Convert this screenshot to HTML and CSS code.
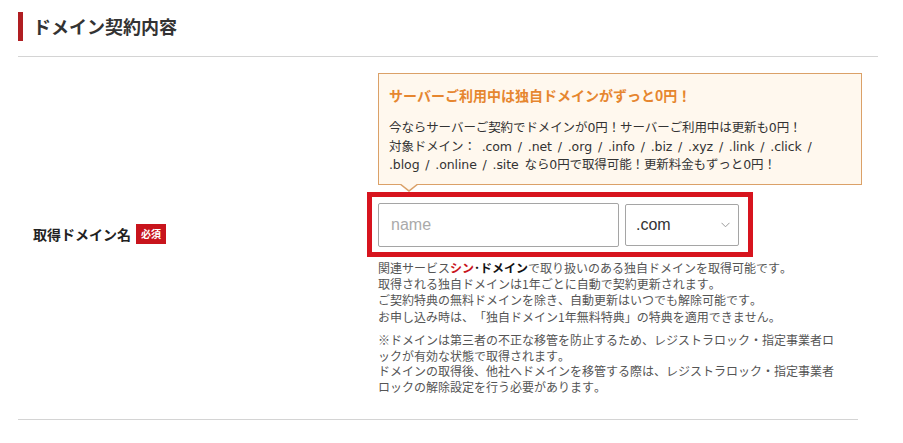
FILE: index.html
```html
<!DOCTYPE html>
<html lang="ja">
<head>
<meta charset="utf-8">
<link rel="stylesheet" href="styles.css">
</head>
<body>
<div class="page">
  <h2 class="heading"><span class="bar"></span>ドメイン契約内容</h2>
  <div class="row">
    <div class="label">取得ドメイン名<span class="badge">必須</span></div>
    <div class="content">
      <div class="callout">
        <p class="callout-title">サーバーご利用中は独自ドメインがずっと0円！</p>
        <p class="callout-body">今ならサーバーご契約でドメインが0円！サーバーご利用中は更新も0円！<br>対象ドメイン： .com / .net / .org / .info / .biz / .xyz / .link / .click /<br>.blog / .online / .site なら0円で取得可能！更新料金もずっと0円！</p>
      </div>
      <div class="highlight">
        <div class="input">name</div>
        <div class="select"><span>.com</span>
          <svg class="chev" width="9" height="6" viewBox="0 0 9 6"><path d="M0.5 0.8 L4.5 4.8 L8.5 0.8" fill="none" stroke="#9a9a9a" stroke-width="1"/></svg>
        </div>
      </div>
      <p class="help">関連サービス<b class="shin">シン</b><b class="dom">･ドメイン</b>で取り扱いのある独自ドメインを取得可能です。<br>取得される独自ドメインは1年ごとに自動で契約更新されます。<br>ご契約特典の無料ドメインを除き、自動更新はいつでも解除可能です。<br>お申し込み時は、「独自ドメイン1年無料特典」の特典を適用できません。</p>
      <p class="help help2">※ドメインは第三者の不正な移管を防止するため、レジストラロック・指定事業者ロックが有効な状態で取得されます。<br>ドメインの取得後、他社へドメインを移管する際は、レジストラロック・指定事業者ロックの解除設定を行う必要があります。</p>
    </div>
  </div>
</div>
</body>
</html>
```
FILE: styles.css
```css
* { box-sizing: border-box; }
body {
  margin: 0;
  background: #fff;
  color: #333;
  font-family: "Noto Sans CJK JP", "Noto Sans", sans-serif;
  text-spacing-trim: space-all;
  font-kerning: none;
  font-feature-settings: "chws" 0, "halt" 0, "palt" 0;
}
.page {
  padding: 12px 0 0 18px;
  width: 878px;
}
.heading {
  margin: 0;
  display: flex;
  align-items: center;
  gap: 10px;
  height: 29px;
  font-size: 18px;
  font-weight: bold;
  color: #333;
  line-height: 29px;
  padding-bottom: 15px;
  box-sizing: content-box;
  border-bottom: 1px solid #d4d4d4;
}
.bar {
  width: 5px;
  height: 29px;
  background: #b01e22;
}
.row {
  width: 840px;
  display: grid;
  grid-template-columns: 349px 1fr;
  border-bottom: 1px solid #d4d4d4;
  padding: 16px 0 25px;
}
.label {
  display: flex;
  align-items: center;
  padding-left: 15px;
  font-size: 14px;
  font-weight: bold;
  color: #222;
}
.badge {
  display: inline-flex;
  align-items: center;
  justify-content: center;
  margin-left: 5px;
  width: 30px;
  height: 20px;
  background: #c8141c;
  color: #fff;
  font-size: 10px;
  font-weight: bold;
}
.content {
  display: flex;
  flex-direction: column;
}
.callout {
  position: relative;
  margin-left: 11px;
  width: 484px;
  background: #fff8ee;
  border: 1px solid #dba168;
  padding: 11px 10px 9px;
}
.callout::before,
.callout::after {
  content: "";
  position: absolute;
  left: 20px;
  border-style: solid;
  border-color: transparent;
}
.callout::before {
  top: 100%;
  border-width: 8px 10px 0;
  border-top-color: #dba168;
}
.callout::after {
  top: 100%;
  margin-top: -1px;
  left: 21px;
  border-width: 7px 9px 0;
  border-top-color: #fff8ee;
}
.callout-title {
  margin: 0;
  font-size: 14px;
  line-height: 20px;
  font-weight: bold;
  color: #e6862f;
}
.callout-body {
  margin: 14px 0 0;
  font-size: 12.5px;
  line-height: 18.5px;
  color: #333;
  font-family: "DejaVu Sans", "Noto Sans CJK JP", sans-serif;
  letter-spacing: -0.1px;
  word-spacing: 2px;
  white-space: nowrap;
}
.highlight {
  margin-top: 7px;
  width: 386px;
  height: 65px;
  border: 5px solid #d7141e;
  display: flex;
  align-items: center;
  gap: 6px;
  padding: 2px 9px 0 6px;
}
.input {
  width: 241px;
  height: 44px;
  border: 1px solid #a5a5a5;
  border-radius: 2px;
  padding-left: 12px;
  display: flex;
  align-items: center;
  font-family: "Liberation Sans", Arial, sans-serif;
  font-size: 16px;
  color: #aaa;
}
.select {
  width: 114px;
  height: 42px;
  border: 1px solid #a5a5a5;
  border-radius: 2px;
  padding: 0 8px 0 10px;
  display: flex;
  align-items: center;
  justify-content: space-between;
  font-family: "Liberation Sans", Arial, sans-serif;
  font-size: 16px;
  color: #333;
}
.help {
  margin: 3px 0 0 11px;
  font-size: 12px;
  line-height: 16.4px;
  color: #555;
}
.help2 {
  margin-top: 7px;
  line-height: 15.5px;
  width: 458px;
  line-break: loose;
}
.shin { color: #c8141c; }
.dom { color: #111; }
```
